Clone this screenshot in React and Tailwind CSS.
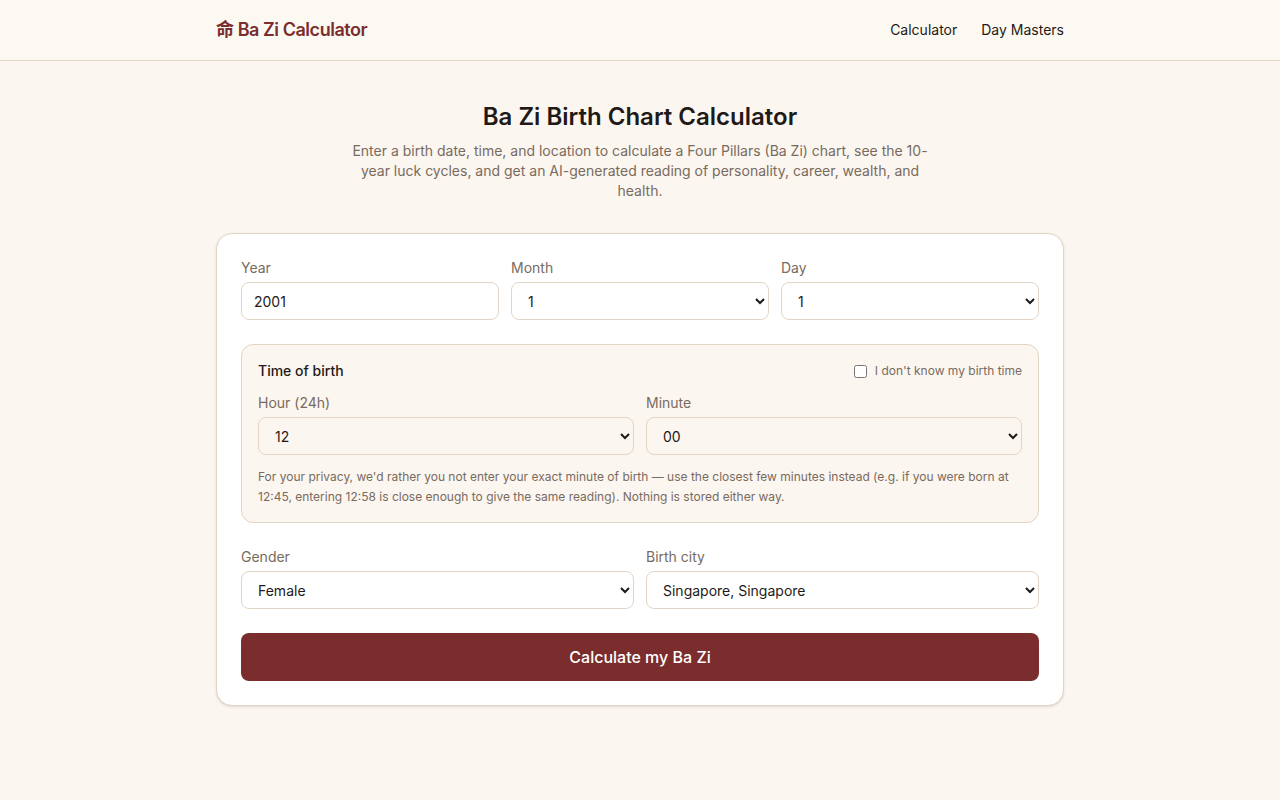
import { useState } from "react";

const range = (from, to) =>
  Array.from({ length: to - from + 1 }, (_, i) => from + i);

const pad = (n) => String(n).padStart(2, "0");

const months = range(1, 12);
const days = range(1, 31);
const hours = range(0, 23).map(pad);
const minutes = range(0, 59).map(pad);

const cities = [
  "Singapore, Singapore",
  "Kuala Lumpur, Malaysia",
  "Hong Kong, China",
  "Taipei, Taiwan",
  "London, United Kingdom",
  "New York, United States",
];

const fieldClass =
  "mt-1 block h-[38px] w-full rounded-lg border border-[#e3d5c5] px-3 text-sm text-[#1f1a17] outline-none focus:border-[#7b2d2d]";

function SelectField({ id, label, value, onChange, options, disabled }) {
  return (
    <div>
      <label htmlFor={id} className="block text-sm text-[#786b5e]">
        {label}
      </label>
      <select
        id={id}
        value={value}
        disabled={disabled}
        onChange={(e) => onChange(e.target.value)}
        className={`${fieldClass} disabled:opacity-50`}
      >
        {options.map((o) => (
          <option key={o} value={o}>
            {o}
          </option>
        ))}
      </select>
    </div>
  );
}

function Header() {
  return (
    <header className="border-b border-[#e3d5c5] bg-[#fcf9f2]">
      <div className="mx-auto flex max-w-4xl items-center justify-between px-6 py-4">
        <a href="#" className="text-lg font-semibold tracking-tight text-[#7b2d2d]">
          命 Ba Zi Calculator
        </a>
        <nav className="flex gap-6 text-sm">
          <a href="#calculator" className="hover:text-[#7b2d2d]">Calculator</a>
          <a href="#day-masters" className="hover:text-[#7b2d2d]">Day Masters</a>
        </nav>
      </div>
    </header>
  );
}

function BirthForm() {
  const [year, setYear] = useState("2001");
  const [month, setMonth] = useState("1");
  const [day, setDay] = useState("1");
  const [hour, setHour] = useState("12");
  const [minute, setMinute] = useState("00");
  const [unknownTime, setUnknownTime] = useState(false);
  const [gender, setGender] = useState("Female");
  const [city, setCity] = useState(cities[0]);

  return (
    <form
      id="calculator"
      onSubmit={(e) => e.preventDefault()}
      className="mt-8 space-y-6 rounded-2xl border border-[#e3d5c5] bg-white p-6 shadow-sm"
    >
      {/* Date */}
      <div className="grid grid-cols-3 gap-3">
        <div>
          <label htmlFor="year" className="block text-sm text-[#786b5e]">
            Year
          </label>
          <input
            id="year"
            type="text"
            inputMode="numeric"
            value={year}
            onChange={(e) => setYear(e.target.value)}
            className={fieldClass}
          />
        </div>
        <SelectField id="month" label="Month" value={month} onChange={setMonth} options={months} />
        <SelectField id="day" label="Day" value={day} onChange={setDay} options={days} />
      </div>

      {/* Time */}
      <div className="rounded-xl border border-[#e3d5c5] bg-[#fcf6f0] p-4">
        <div className="flex items-center justify-between">
          <h2 className="text-sm font-medium">Time of birth</h2>
          <label className="flex items-center gap-2 text-xs text-[#786b5e]">
            <input
              type="checkbox"
              checked={unknownTime}
              onChange={(e) => setUnknownTime(e.target.checked)}
            />
            I don't know my birth time
          </label>
        </div>
        <div className="mt-3 grid grid-cols-2 gap-3">
          <SelectField
            id="hour"
            label="Hour (24h)"
            value={hour}
            onChange={setHour}
            options={hours}
            disabled={unknownTime}
          />
          <SelectField
            id="minute"
            label="Minute"
            value={minute}
            onChange={setMinute}
            options={minutes}
            disabled={unknownTime}
          />
        </div>
        <p className="mt-3 text-xs leading-relaxed text-[#786b5e]">
          For your privacy, we'd rather you not enter your exact minute of birth — use the
          closest few minutes instead (e.g. if you were born at 12:45, entering 12:58 is close
          enough to give the same reading). Nothing is stored either way.
        </p>
      </div>

      {/* Gender + city */}
      <div className="grid grid-cols-2 gap-3">
        <SelectField
          id="gender"
          label="Gender"
          value={gender}
          onChange={setGender}
          options={["Female", "Male"]}
        />
        <SelectField id="city" label="Birth city" value={city} onChange={setCity} options={cities} />
      </div>

      <button
        type="submit"
        className="w-full rounded-lg bg-[#7b2d2d] py-3 font-medium text-white hover:bg-[#6a2626]"
      >
        Calculate my Ba Zi
      </button>
    </form>
  );
}

function App() {
  return (
    <div className="min-h-screen bg-[#fcf6f0] font-[Inter,'Noto_Sans_CJK_SC',sans-serif] text-[#1f1a17]">
      <Header />
      <main className="mx-auto max-w-4xl px-6 py-10">
        <div className="text-center">
          <h1 className="text-2xl font-semibold">Ba Zi Birth Chart Calculator</h1>
          <p className="mx-auto mt-2 max-w-xl text-sm text-[#786b5e]">
            Enter a birth date, time, and location to calculate a Four Pillars (Ba Zi) chart, see
            the 10-year luck cycles, and get an AI-generated reading of personality, career,
            wealth, and health.
          </p>
        </div>
        <BirthForm />
      </main>
    </div>
  );
}

export default App;
